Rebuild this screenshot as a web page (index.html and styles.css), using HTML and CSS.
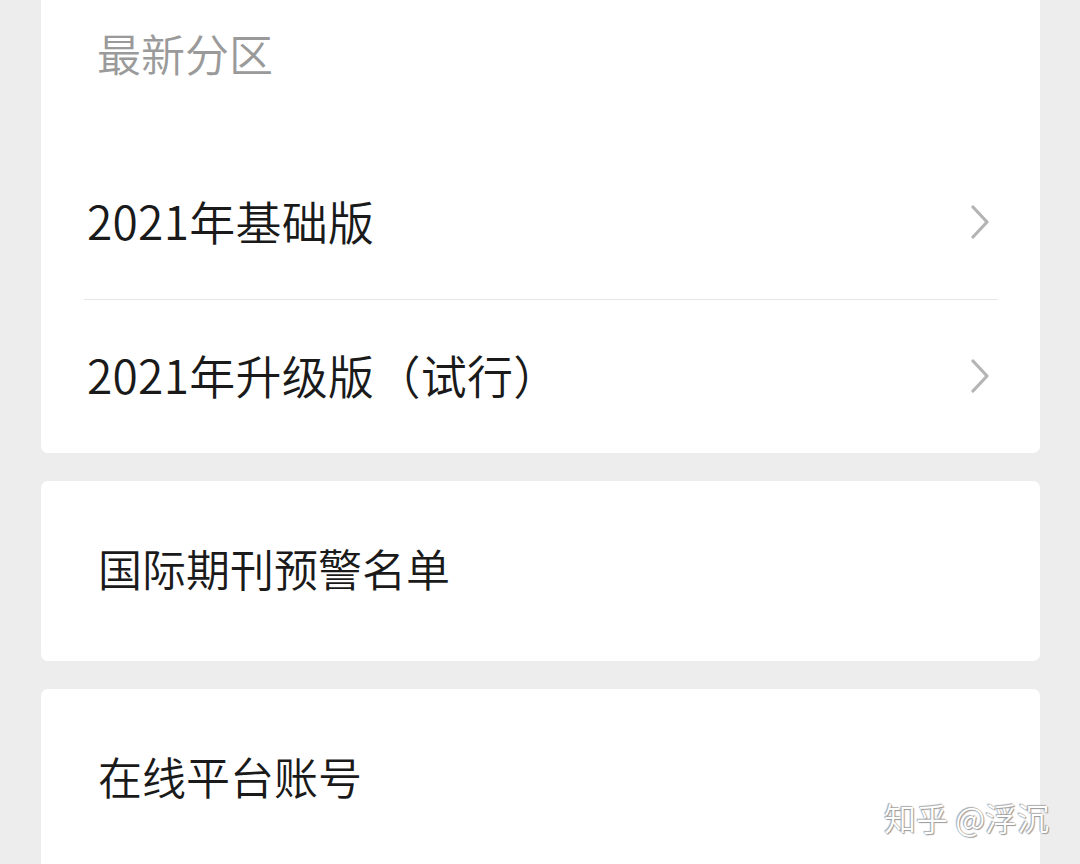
FILE: index.html
```html
<!DOCTYPE html>
<html lang="zh-CN">
<head>
<meta charset="utf-8">
<link rel="stylesheet" href="styles.css">
</head>
<body>
<div class="page">
  <section class="card card-first">
    <div class="section-title">最新分区</div>
    <div class="row row-divided">
      <span class="row-label">2021年基础版</span>
      <svg class="chevron" viewBox="0 0 20 34" width="20" height="34"><path d="M3 2 L17 17 L3 32" fill="none" stroke="#b4b4b4" stroke-width="3.2" stroke-linecap="round" stroke-linejoin="round"/></svg>
    </div>
    <div class="row">
      <span class="row-label">2021年升级版（试行）</span>
      <svg class="chevron" viewBox="0 0 20 34" width="20" height="34"><path d="M3 2 L17 17 L3 32" fill="none" stroke="#b4b4b4" stroke-width="3.2" stroke-linecap="round" stroke-linejoin="round"/></svg>
    </div>
  </section>
  <section class="card card-single">
    <span class="single-label">国际期刊预警名单</span>
  </section>
  <section class="card card-single">
    <span class="single-label">在线平台账号</span>
  </section>
</div>
<div class="watermark">知乎 @浮沉</div>
</body>
</html>
```
FILE: styles.css
```css
html, body {
  margin: 0;
  padding: 0;
}
body {
  background: #ededed;
  font-family: "Noto Sans CJK SC", "Noto Sans", sans-serif;
  font-weight: 350;
  color: #1a1a1a;
  width: 1080px;
  height: 864px;
  overflow: hidden;
  position: relative;
}
.page {
  display: flex;
  flex-direction: column;
  gap: 28px;
  padding: 0 40px 0 41px;
}
.card {
  background: #ffffff;
  border-radius: 7px;
}
.card-first {
  border-radius: 0 0 7px 7px;
}
.section-title {
  height: 147px;
  line-height: 106px;
  padding-left: 56px;
  font-size: 44px;
  color: #9a9a9a;
}
.row {
  height: 153px;
  margin: 0 42px 0 43px;
  padding: 0 8px 6px 3px;
  display: flex;
  align-items: center;
  justify-content: space-between;
  box-sizing: border-box;
}
.row-divided {
  border-bottom: 1.5px solid #e6e6e6;
}
.row-label {
  font-size: 46px;
  line-height: 1;
  letter-spacing: 0.3px;
}
.chevron {
  display: block;
  flex: none;
  margin-top: 4px;
}
.card-single {
  height: 180px;
  display: flex;
  align-items: center;
  padding: 0 0 6px 57px;
  box-sizing: border-box;
}
.single-label {
  font-size: 44px;
  line-height: 1;
}
.watermark {
  position: absolute;
  left: 884px;
  top: 801px;
  font-size: 32px;
  line-height: 1;
  color: #ffffff;
  text-shadow: 0 0 1px #8a8a8a, 1px 1px 1px #9a9a9a, -1px -1px 1px #b0b0b0;
}
```
